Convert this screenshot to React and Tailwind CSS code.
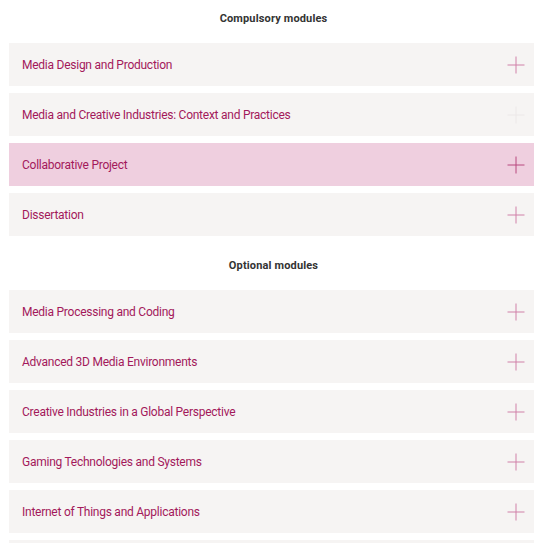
import React from "react";

const compulsory = [
  { title: "Media Design and Production" },
  { title: "Media and Creative Industries: Context and Practices", faint: true },
  { title: "Collaborative Project", active: true },
  { title: "Dissertation" },
];

const optional = [
  { title: "Media Processing and Coding" },
  { title: "Advanced 3D Media Environments" },
  { title: "Creative Industries in a Global Perspective" },
  { title: "Gaming Technologies and Systems" },
  { title: "Internet of Things and Applications" },
];

const Plus = ({ faint, active }) => (
  <svg width="18" height="18" viewBox="0 0 18 18" className="shrink-0">
    <path
      d="M9 0.5V17.5M0.5 9H17.5"
      stroke={faint ? "#ece8e8" : active ? "#b8487f" : "#d080a8"}
      strokeWidth="1"
      fill="none"
    />
  </svg>
);

const ModuleRow = ({ title, faint, active }) => (
  <div
    className={`flex items-center justify-between h-[43px] pl-[13px] pr-[13px] ${
      active ? "bg-[#efcfdf]" : "bg-[#f6f4f3]"
    }`}
  >
    <span className="text-[12px] text-[#a3195b] tracking-[-0.25px]">{title}</span>
    <Plus faint={faint} active={active} />
  </div>
);

const Section = ({ heading, items, tail }) => (
  <div className="ml-[9px] w-[529px]">
    <h2 className="text-center text-[11px] font-bold text-[#333333] tracking-[0.15px] h-[43px] pt-[11px]">
      {heading}
    </h2>
    <div className="flex flex-col gap-[7px]">
      {items.map((m) => (
        <ModuleRow key={m.title} {...m} />
      ))}
      {tail && <div className="h-[43px] bg-[#f6f4f3]" />}
    </div>
  </div>
);

export default function App() {
  return (
    <div
      className="w-[534px] h-[543px] overflow-hidden bg-white"
      style={{ fontFamily: "Roboto, 'Liberation Sans', sans-serif" }}
    >
      <Section heading="Compulsory modules" items={compulsory} />
      <div className="h-[11px]" />
      <Section heading="Optional modules" items={optional} tail />
    </div>
  );
}
